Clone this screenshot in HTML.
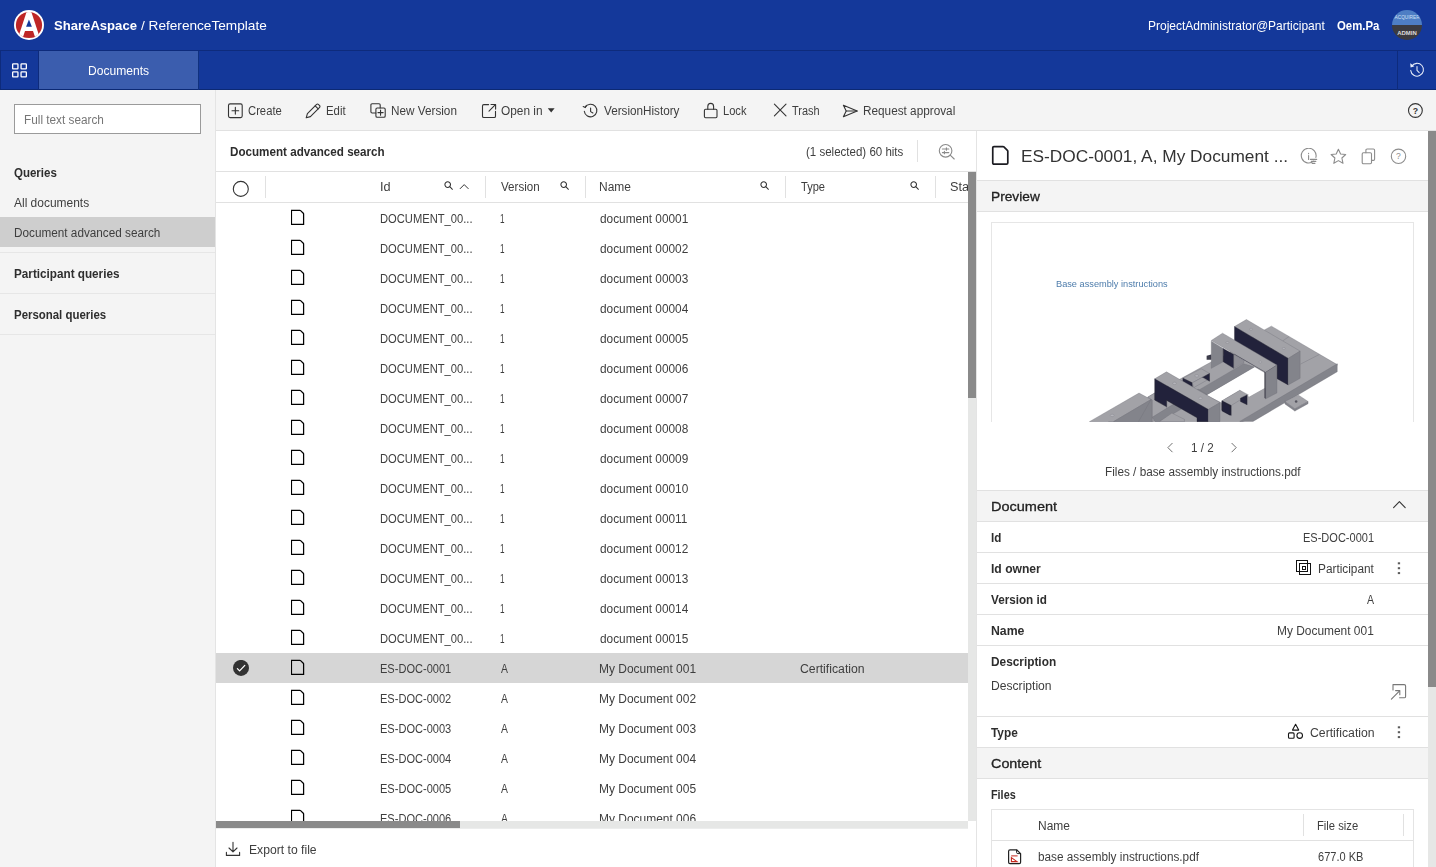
<!DOCTYPE html>
<html><head><meta charset="utf-8"><title>ShareAspace</title>
<style>
html,body{margin:0;padding:0;}
body{width:1436px;height:867px;overflow:hidden;position:relative;background:#fff;font-family:"Liberation Sans",sans-serif;}
.b{position:absolute;display:block;}
.t{position:absolute;white-space:nowrap;line-height:20px;transform-origin:0 50%;display:block;}
</style></head><body>
<div class="b" style="left:0px;top:0px;width:1436px;height:50px;background:#14389a;"></div>
<div class="b" style="left:0px;top:50px;width:1436px;height:1px;background:#0e2b7c;"></div>
<div class="b" style="left:0px;top:51px;width:1436px;height:39px;background:#14389a;"></div>
<div class="b" style="left:0px;top:89px;width:1436px;height:1px;background:#0c2974;"></div>
<div class="b" style="left:0px;top:51px;width:1px;height:38px;background:#0e2b7c;"></div>
<div class="b" style="left:38px;top:51px;width:1px;height:39px;background:#0e2b7c;"></div>
<div class="b" style="left:39px;top:51px;width:159px;height:38px;background:#3b5dae;"></div>
<div class="b" style="left:198px;top:51px;width:1px;height:39px;background:#10317f;"></div>
<div class="b" style="left:1397px;top:51px;width:1px;height:39px;background:#0e2b7c;"></div>
<svg class="b" style="left:14px;top:10px;" width="30" height="30" viewBox="0 0 30 30" fill="none"><defs><clipPath id="lc"><circle cx="15" cy="15" r="13.1"/></clipPath></defs>
<circle cx="15" cy="15" r="15" fill="#fff"/>
<circle cx="15" cy="15" r="13.1" fill="#be2626"/>
<g clip-path="url(#lc)">
<polygon points="13.2,0 16.7,0 26.55,30 3.35,30" fill="#fff"/>
<polygon points="14.95,9.4 17.9,16.7 12.1,16.7" fill="#14389a"/>
<polygon points="11.0,21 19.0,21 22,30 8,30" fill="#be2626"/>
</g></svg>
<span class="t" style="left:53.52px;top:15.76px;font-size:13.4px;font-weight:bold;color:#fff;transform:scaleX(0.9777);">ShareAspace</span>
<span class="t" style="left:141.40px;top:15.69px;font-size:13.6px;color:#fff;transform:scaleX(1.0025);">/ ReferenceTemplate</span>
<span class="t" style="left:1147.72px;top:15.80px;font-size:12.4px;color:#fff;transform:scaleX(0.9675);">ProjectAdministrator@Participant</span>
<span class="t" style="left:1337.23px;top:15.80px;font-size:12.4px;font-weight:bold;color:#fff;transform:scaleX(0.9180);">Oem.Pa</span>
<svg class="b" style="left:1392px;top:10px;" width="30" height="30" viewBox="0 0 30 30" fill="none"><defs><clipPath id="ac"><circle cx="15" cy="15" r="15"/></clipPath></defs>
<g clip-path="url(#ac)"><rect width="30" height="15" fill="#4e7ec4"/><rect y="15" width="30" height="15" fill="#3b3b40"/>
<text x="2.6" y="8.6" font-family="Liberation Sans" font-size="4.6" fill="#cfe0f5" textLength="25" lengthAdjust="spacingAndGlyphs">ACQUIRER</text>
<text x="5.2" y="24.6" font-family="Liberation Sans" font-weight="bold" font-size="5.2" fill="#dcdcdc" textLength="19.6" lengthAdjust="spacingAndGlyphs">ADMIN</text></g></svg>
<svg class="b" style="left:11px;top:62px;" width="18" height="18" viewBox="0 0 18 18" fill="none"><g stroke="#fff" stroke-width="1.3"><rect x="1.65" y="1.85" width="5.3" height="5" rx=".6"/><rect x="10.05" y="1.85" width="5.3" height="5" rx=".6"/><rect x="1.65" y="9.95" width="5.3" height="5" rx=".6"/><rect x="10.05" y="9.95" width="5.3" height="5" rx=".6"/></g></svg>
<span class="t" style="left:87.71px;top:60.74px;font-size:12px;color:#fff;transform:scaleX(1.0055);">Documents</span>
<svg class="b" style="left:1408px;top:61px;" width="18" height="18" viewBox="0 0 18 18" fill="none"><g stroke="#e8eefa" stroke-width="1.05" stroke-linecap="round" stroke-linejoin="round"><path d="M3.6 5.4 A6.4 6.4 0 1 1 2.7 9.4"/><path d="M9 5.6 V9.4 L11.2 11.6"/></g><path d="M2.2 2.2 L2.6 6.4 L6.4 5.2 Z" fill="#e8eefa"/></svg>
<div class="b" style="left:0px;top:90px;width:215px;height:777px;background:#f4f4f4;"></div>
<div class="b" style="left:215px;top:90px;width:1px;height:777px;background:#e4e4e4;"></div>
<div class="b" style="left:14px;top:104px;width:187px;height:30px;background:#fff;box-sizing:border-box;border:1px solid #9a9a9a;"></div>
<span class="t" style="left:24.43px;top:110.24px;font-size:12px;color:#767676;transform:scaleX(0.9824);">Full text search</span>
<span class="t" style="left:14.13px;top:163.24px;font-size:12px;font-weight:bold;color:#2e2e2e;transform:scaleX(0.9587);">Queries</span>
<span class="t" style="left:14.48px;top:193.04px;font-size:12px;color:#3e3e3e;transform:scaleX(0.9972);">All documents</span>
<div class="b" style="left:0px;top:217px;width:215px;height:30px;background:#cecece;"></div>
<span class="t" style="left:14.19px;top:223.04px;font-size:12px;color:#3e3e3e;transform:scaleX(0.9796);">Document advanced search</span>
<div class="b" style="left:0px;top:252px;width:215px;height:1px;background:#e6e6e6;"></div>
<span class="t" style="left:14.32px;top:264.04px;font-size:12px;font-weight:bold;color:#2e2e2e;transform:scaleX(0.9762);">Participant queries</span>
<div class="b" style="left:0px;top:293px;width:215px;height:1px;background:#e6e6e6;"></div>
<span class="t" style="left:14.34px;top:304.84px;font-size:12px;font-weight:bold;color:#2e2e2e;transform:scaleX(0.9527);">Personal queries</span>
<div class="b" style="left:0px;top:334px;width:215px;height:1px;background:#e6e6e6;"></div>
<div class="b" style="left:216px;top:90px;width:1220px;height:40px;background:#f4f4f4;"></div>
<div class="b" style="left:216px;top:130px;width:1220px;height:1px;background:#e1e1e1;"></div>
<svg class="b" style="left:227px;top:102px;" width="17" height="17" viewBox="0 0 17 17" fill="none"><g stroke="#333" stroke-width="1.1" stroke-linecap="round" stroke-linejoin="round"><rect x="1.5" y="1.9" width="13.7" height="13.7" rx="1.6"/><path d="M8.35 5.4V12.1M5 8.75H11.7"/></g></svg>
<span class="t" style="left:248.23px;top:100.84px;font-size:12px;color:#3e3e3e;transform:scaleX(0.9376);">Create</span>
<svg class="b" style="left:305px;top:103px;" width="17" height="16" viewBox="0 0 17 16" fill="none"><g stroke="#333" stroke-width="1.1" stroke-linecap="round" stroke-linejoin="round"><path d="M1.2 14.8 L2.4 10.6 L11.6 1.4 Q12.6 .6 13.6 1.6 L14.6 2.6 Q15.4 3.6 14.4 4.6 L5.4 13.6 Z"/><path d="M10.2 2.8 L13.2 5.8"/></g></svg>
<span class="t" style="left:326.47px;top:100.84px;font-size:12px;color:#3e3e3e;transform:scaleX(0.9487);">Edit</span>
<svg class="b" style="left:369px;top:102px;" width="18" height="17" viewBox="0 0 18 17" fill="none"><g stroke="#333" stroke-width="1.1" stroke-linecap="round" stroke-linejoin="round"><path d="M6.9 11 H3.1 Q1.9 11 1.9 9.8 V3 Q1.9 1.8 3.1 1.8 H10 Q11.2 1.8 11.2 3 V6"/><rect x="6.9" y="6" width="9.3" height="9.2" rx="1.3"/><path d="M11.55 8V13.2M8.95 10.6H14.15"/></g></svg>
<span class="t" style="left:390.64px;top:100.84px;font-size:12px;color:#3e3e3e;transform:scaleX(0.9786);">New Version</span>
<svg class="b" style="left:481px;top:103px;" width="16" height="16" viewBox="0 0 16 16" fill="none"><g stroke="#333" stroke-width="1.1" stroke-linecap="round" stroke-linejoin="round"><path d="M7.6 1.6 H2.8 Q1.5 1.6 1.5 2.9 V13.2 Q1.5 14.5 2.8 14.5 H13.2 Q14.5 14.5 14.5 13.2 V8.4"/><path d="M10 1.5 H14.6 V6.1"/><path d="M14.4 1.7 L8 8.1"/></g></svg>
<span class="t" style="left:500.84px;top:100.84px;font-size:12px;color:#3e3e3e;transform:scaleX(0.9882);">Open in</span>
<svg class="b" style="left:547px;top:107px;" width="9" height="7" viewBox="0 0 9 7" fill="none"><polygon points="0.8,1.2 7.6,1.2 4.2,5.4" fill="#333"/></svg>
<svg class="b" style="left:582px;top:103px;" width="17" height="16" viewBox="0 0 17 16" fill="none"><g stroke="#333" stroke-width="1.1" stroke-linecap="round" stroke-linejoin="round"><path d="M3.2 4.2 A6.3 6.3 0 1 1 2.3 8.2"/><path d="M1.2 3.6 L3.3 4.6 L4.3 2.4" /><path d="M8.6 5 V8.6 L10.9 10"/></g></svg>
<span class="t" style="left:603.65px;top:100.84px;font-size:12px;color:#3e3e3e;transform:scaleX(0.9756);">VersionHistory</span>
<svg class="b" style="left:703px;top:102px;" width="16" height="17" viewBox="0 0 16 17" fill="none"><g stroke="#333" stroke-width="1.1" stroke-linecap="round" stroke-linejoin="round"><rect x="1.4" y="7.2" width="12.6" height="8.6" rx="1.2"/><path d="M4.8 7.2 V4.4 Q4.8 1.4 7.7 1.4 Q10.6 1.4 10.6 4.4 V7.2"/></g></svg>
<span class="t" style="left:723.39px;top:100.84px;font-size:12px;color:#3e3e3e;transform:scaleX(0.9270);">Lock</span>
<svg class="b" style="left:773px;top:103.3px;" width="15" height="14" viewBox="0 0 15 14" fill="none"><g stroke="#333" stroke-width="1.1" stroke-linecap="round" stroke-linejoin="round"><path d="M1.4 1.2 L13 12.8M13 1.2 L1.4 12.8"/></g></svg>
<span class="t" style="left:791.95px;top:100.84px;font-size:12px;color:#3e3e3e;transform:scaleX(0.9116);">Trash</span>
<svg class="b" style="left:842px;top:102.5px;" width="17" height="16" viewBox="0 0 17 16" fill="none"><g stroke="#333" stroke-width="1.1" stroke-linecap="round" stroke-linejoin="round"><path d="M1.4 2.2 L15.2 8 L1.4 13.8 L4.2 8 Z"/><path d="M4.2 8 H15"/></g></svg>
<span class="t" style="left:862.73px;top:100.84px;font-size:12px;color:#3e3e3e;transform:scaleX(0.9808);">Request approval</span>
<svg class="b" style="left:1407px;top:102px;" width="18" height="18" viewBox="0 0 18 18" fill="none"><g stroke="#333" stroke-width="1.1"><circle cx="8.4" cy="8.5" r="6.9"/></g><text x="8.4" y="11.7" font-size="8.8" font-weight="bold" font-family="Liberation Sans" text-anchor="middle" fill="#333">?</text></svg>
<span class="t" style="left:229.82px;top:141.57px;font-size:12.5px;font-weight:bold;color:#2e2e2e;transform:scaleX(0.9317);">Document advanced search</span>
<span class="t" style="left:806.19px;top:141.84px;font-size:12px;color:#3e3e3e;transform:scaleX(0.9600);">(1 selected) 60 hits</span>
<div class="b" style="left:917px;top:140px;width:1px;height:22px;background:#e1e1e1;"></div>
<svg class="b" style="left:937px;top:143px;" width="20" height="19" viewBox="0 0 20 19" fill="none"><g stroke="#8a8a8a" stroke-width="1.1" stroke-linecap="round"><circle cx="8.6" cy="7.8" r="6.3"/><path d="M13.2 12.2 L17.2 16"/><path d="M5.4 6 H11.8M5.4 9.6 H11.8M9.4 4.8 V7.2M7.4 8.4 V10.8"/></g></svg>
<div class="b" style="left:216px;top:171px;width:760px;height:1px;background:#e1e1e1;"></div>
<div class="b" style="left:216px;top:202px;width:752px;height:1px;background:#e1e1e1;"></div>
<svg class="b" style="left:232px;top:180px;" width="18" height="18" viewBox="0 0 18 18" fill="none"><circle cx="8.8" cy="8.9" r="7.5" stroke="#333" stroke-width="1.1"/></svg>
<div class="b" style="left:265px;top:176px;width:1px;height:22px;background:#e1e1e1;"></div>
<div class="b" style="left:485px;top:176px;width:1px;height:22px;background:#e1e1e1;"></div>
<div class="b" style="left:585px;top:176px;width:1px;height:22px;background:#e1e1e1;"></div>
<div class="b" style="left:785px;top:176px;width:1px;height:22px;background:#e1e1e1;"></div>
<div class="b" style="left:935px;top:176px;width:1px;height:22px;background:#e1e1e1;"></div>
<span class="t" style="left:379.83px;top:176.84px;font-size:12px;color:#3e3e3e;transform:scaleX(1.0582);">Id</span>
<span class="t" style="left:500.65px;top:176.84px;font-size:12px;color:#3e3e3e;transform:scaleX(0.9670);">Version</span>
<span class="t" style="left:599.42px;top:176.84px;font-size:12px;color:#3e3e3e;transform:scaleX(0.9970);">Name</span>
<span class="t" style="left:800.95px;top:176.84px;font-size:12px;color:#3e3e3e;transform:scaleX(0.9241);">Type</span>
<div class="b" style="left:940px;top:172px;width:28px;height:30px;overflow:hidden;">
<span class="t" style="left:9.52px;top:4.84px;font-size:12px;color:#3e3e3e;transform:scaleX(1.0563);">Status</span>
</div>
<svg class="b" style="left:444px;top:181px;" width="10" height="10" viewBox="0 0 10 10" fill="none"><g stroke="#333" stroke-width="1.05" stroke-linecap="round"><circle cx="3.7" cy="3.6" r="2.8"/><path d="M5.8 5.7 L8.4 8.3"/></g></svg>
<svg class="b" style="left:560px;top:181px;" width="10" height="10" viewBox="0 0 10 10" fill="none"><g stroke="#333" stroke-width="1.05" stroke-linecap="round"><circle cx="3.7" cy="3.6" r="2.8"/><path d="M5.8 5.7 L8.4 8.3"/></g></svg>
<svg class="b" style="left:760px;top:181px;" width="10" height="10" viewBox="0 0 10 10" fill="none"><g stroke="#333" stroke-width="1.05" stroke-linecap="round"><circle cx="3.7" cy="3.6" r="2.8"/><path d="M5.8 5.7 L8.4 8.3"/></g></svg>
<svg class="b" style="left:910px;top:181px;" width="10" height="10" viewBox="0 0 10 10" fill="none"><g stroke="#333" stroke-width="1.05" stroke-linecap="round"><circle cx="3.7" cy="3.6" r="2.8"/><path d="M5.8 5.7 L8.4 8.3"/></g></svg>
<svg class="b" style="left:459px;top:182px;" width="11" height="8" viewBox="0 0 11 8" fill="none"><path d="M1.2 6.6 L5.2 2.6 L9.2 6.6" stroke="#333" stroke-width="1" stroke-linecap="round" stroke-linejoin="round"/></svg>
<div class="b" style="left:216px;top:203px;width:752px;height:618px;overflow:hidden;">
<svg class="b" style="left:75px;top:6px;" width="14" height="17" viewBox="0 0 14 17" fill="none"><path d="M.45 1.3 H8.9 Q9.3 1.3 9.6 1.6 L12.3 4.3 Q12.6 4.6 12.6 5 V15.3 H.45 Z" stroke="#000" stroke-width="1.25" stroke-linejoin="miter"/></svg>
<span class="t" style="left:163.98px;top:5.74px;font-size:12px;color:#3e3e3e;transform:scaleX(0.9314);">DOCUMENT_00...</span>
<span class="t" style="left:284.08px;top:5.74px;font-size:12px;color:#3e3e3e;transform:scaleX(0.6765);">1</span>
<span class="t" style="left:383.90px;top:5.74px;font-size:12px;color:#3e3e3e;transform:scaleX(0.9874);">document 00001</span>
<svg class="b" style="left:75px;top:36px;" width="14" height="17" viewBox="0 0 14 17" fill="none"><path d="M.45 1.3 H8.9 Q9.3 1.3 9.6 1.6 L12.3 4.3 Q12.6 4.6 12.6 5 V15.3 H.45 Z" stroke="#000" stroke-width="1.25" stroke-linejoin="miter"/></svg>
<span class="t" style="left:163.98px;top:35.74px;font-size:12px;color:#3e3e3e;transform:scaleX(0.9314);">DOCUMENT_00...</span>
<span class="t" style="left:284.08px;top:35.74px;font-size:12px;color:#3e3e3e;transform:scaleX(0.6765);">1</span>
<span class="t" style="left:383.90px;top:35.74px;font-size:12px;color:#3e3e3e;transform:scaleX(0.9874);">document 00002</span>
<svg class="b" style="left:75px;top:66px;" width="14" height="17" viewBox="0 0 14 17" fill="none"><path d="M.45 1.3 H8.9 Q9.3 1.3 9.6 1.6 L12.3 4.3 Q12.6 4.6 12.6 5 V15.3 H.45 Z" stroke="#000" stroke-width="1.25" stroke-linejoin="miter"/></svg>
<span class="t" style="left:163.98px;top:65.74px;font-size:12px;color:#3e3e3e;transform:scaleX(0.9314);">DOCUMENT_00...</span>
<span class="t" style="left:284.08px;top:65.74px;font-size:12px;color:#3e3e3e;transform:scaleX(0.6765);">1</span>
<span class="t" style="left:383.90px;top:65.74px;font-size:12px;color:#3e3e3e;transform:scaleX(0.9874);">document 00003</span>
<svg class="b" style="left:75px;top:96px;" width="14" height="17" viewBox="0 0 14 17" fill="none"><path d="M.45 1.3 H8.9 Q9.3 1.3 9.6 1.6 L12.3 4.3 Q12.6 4.6 12.6 5 V15.3 H.45 Z" stroke="#000" stroke-width="1.25" stroke-linejoin="miter"/></svg>
<span class="t" style="left:163.98px;top:95.74px;font-size:12px;color:#3e3e3e;transform:scaleX(0.9314);">DOCUMENT_00...</span>
<span class="t" style="left:284.08px;top:95.74px;font-size:12px;color:#3e3e3e;transform:scaleX(0.6765);">1</span>
<span class="t" style="left:383.90px;top:95.74px;font-size:12px;color:#3e3e3e;transform:scaleX(0.9874);">document 00004</span>
<svg class="b" style="left:75px;top:126px;" width="14" height="17" viewBox="0 0 14 17" fill="none"><path d="M.45 1.3 H8.9 Q9.3 1.3 9.6 1.6 L12.3 4.3 Q12.6 4.6 12.6 5 V15.3 H.45 Z" stroke="#000" stroke-width="1.25" stroke-linejoin="miter"/></svg>
<span class="t" style="left:163.98px;top:125.74px;font-size:12px;color:#3e3e3e;transform:scaleX(0.9314);">DOCUMENT_00...</span>
<span class="t" style="left:284.08px;top:125.74px;font-size:12px;color:#3e3e3e;transform:scaleX(0.6765);">1</span>
<span class="t" style="left:383.90px;top:125.74px;font-size:12px;color:#3e3e3e;transform:scaleX(0.9874);">document 00005</span>
<svg class="b" style="left:75px;top:156px;" width="14" height="17" viewBox="0 0 14 17" fill="none"><path d="M.45 1.3 H8.9 Q9.3 1.3 9.6 1.6 L12.3 4.3 Q12.6 4.6 12.6 5 V15.3 H.45 Z" stroke="#000" stroke-width="1.25" stroke-linejoin="miter"/></svg>
<span class="t" style="left:163.98px;top:155.74px;font-size:12px;color:#3e3e3e;transform:scaleX(0.9314);">DOCUMENT_00...</span>
<span class="t" style="left:284.08px;top:155.74px;font-size:12px;color:#3e3e3e;transform:scaleX(0.6765);">1</span>
<span class="t" style="left:383.90px;top:155.74px;font-size:12px;color:#3e3e3e;transform:scaleX(0.9874);">document 00006</span>
<svg class="b" style="left:75px;top:186px;" width="14" height="17" viewBox="0 0 14 17" fill="none"><path d="M.45 1.3 H8.9 Q9.3 1.3 9.6 1.6 L12.3 4.3 Q12.6 4.6 12.6 5 V15.3 H.45 Z" stroke="#000" stroke-width="1.25" stroke-linejoin="miter"/></svg>
<span class="t" style="left:163.98px;top:185.74px;font-size:12px;color:#3e3e3e;transform:scaleX(0.9314);">DOCUMENT_00...</span>
<span class="t" style="left:284.08px;top:185.74px;font-size:12px;color:#3e3e3e;transform:scaleX(0.6765);">1</span>
<span class="t" style="left:383.90px;top:185.74px;font-size:12px;color:#3e3e3e;transform:scaleX(0.9874);">document 00007</span>
<svg class="b" style="left:75px;top:216px;" width="14" height="17" viewBox="0 0 14 17" fill="none"><path d="M.45 1.3 H8.9 Q9.3 1.3 9.6 1.6 L12.3 4.3 Q12.6 4.6 12.6 5 V15.3 H.45 Z" stroke="#000" stroke-width="1.25" stroke-linejoin="miter"/></svg>
<span class="t" style="left:163.98px;top:215.74px;font-size:12px;color:#3e3e3e;transform:scaleX(0.9314);">DOCUMENT_00...</span>
<span class="t" style="left:284.08px;top:215.74px;font-size:12px;color:#3e3e3e;transform:scaleX(0.6765);">1</span>
<span class="t" style="left:383.90px;top:215.74px;font-size:12px;color:#3e3e3e;transform:scaleX(0.9874);">document 00008</span>
<svg class="b" style="left:75px;top:246px;" width="14" height="17" viewBox="0 0 14 17" fill="none"><path d="M.45 1.3 H8.9 Q9.3 1.3 9.6 1.6 L12.3 4.3 Q12.6 4.6 12.6 5 V15.3 H.45 Z" stroke="#000" stroke-width="1.25" stroke-linejoin="miter"/></svg>
<span class="t" style="left:163.98px;top:245.74px;font-size:12px;color:#3e3e3e;transform:scaleX(0.9314);">DOCUMENT_00...</span>
<span class="t" style="left:284.08px;top:245.74px;font-size:12px;color:#3e3e3e;transform:scaleX(0.6765);">1</span>
<span class="t" style="left:383.90px;top:245.74px;font-size:12px;color:#3e3e3e;transform:scaleX(0.9874);">document 00009</span>
<svg class="b" style="left:75px;top:276px;" width="14" height="17" viewBox="0 0 14 17" fill="none"><path d="M.45 1.3 H8.9 Q9.3 1.3 9.6 1.6 L12.3 4.3 Q12.6 4.6 12.6 5 V15.3 H.45 Z" stroke="#000" stroke-width="1.25" stroke-linejoin="miter"/></svg>
<span class="t" style="left:163.98px;top:275.74px;font-size:12px;color:#3e3e3e;transform:scaleX(0.9314);">DOCUMENT_00...</span>
<span class="t" style="left:284.08px;top:275.74px;font-size:12px;color:#3e3e3e;transform:scaleX(0.6765);">1</span>
<span class="t" style="left:383.90px;top:275.74px;font-size:12px;color:#3e3e3e;transform:scaleX(0.9874);">document 00010</span>
<svg class="b" style="left:75px;top:306px;" width="14" height="17" viewBox="0 0 14 17" fill="none"><path d="M.45 1.3 H8.9 Q9.3 1.3 9.6 1.6 L12.3 4.3 Q12.6 4.6 12.6 5 V15.3 H.45 Z" stroke="#000" stroke-width="1.25" stroke-linejoin="miter"/></svg>
<span class="t" style="left:163.98px;top:305.74px;font-size:12px;color:#3e3e3e;transform:scaleX(0.9314);">DOCUMENT_00...</span>
<span class="t" style="left:284.08px;top:305.74px;font-size:12px;color:#3e3e3e;transform:scaleX(0.6765);">1</span>
<span class="t" style="left:383.90px;top:305.74px;font-size:12px;color:#3e3e3e;transform:scaleX(0.9874);">document 00011</span>
<svg class="b" style="left:75px;top:336px;" width="14" height="17" viewBox="0 0 14 17" fill="none"><path d="M.45 1.3 H8.9 Q9.3 1.3 9.6 1.6 L12.3 4.3 Q12.6 4.6 12.6 5 V15.3 H.45 Z" stroke="#000" stroke-width="1.25" stroke-linejoin="miter"/></svg>
<span class="t" style="left:163.98px;top:335.74px;font-size:12px;color:#3e3e3e;transform:scaleX(0.9314);">DOCUMENT_00...</span>
<span class="t" style="left:284.08px;top:335.74px;font-size:12px;color:#3e3e3e;transform:scaleX(0.6765);">1</span>
<span class="t" style="left:383.90px;top:335.74px;font-size:12px;color:#3e3e3e;transform:scaleX(0.9874);">document 00012</span>
<svg class="b" style="left:75px;top:366px;" width="14" height="17" viewBox="0 0 14 17" fill="none"><path d="M.45 1.3 H8.9 Q9.3 1.3 9.6 1.6 L12.3 4.3 Q12.6 4.6 12.6 5 V15.3 H.45 Z" stroke="#000" stroke-width="1.25" stroke-linejoin="miter"/></svg>
<span class="t" style="left:163.98px;top:365.74px;font-size:12px;color:#3e3e3e;transform:scaleX(0.9314);">DOCUMENT_00...</span>
<span class="t" style="left:284.08px;top:365.74px;font-size:12px;color:#3e3e3e;transform:scaleX(0.6765);">1</span>
<span class="t" style="left:383.90px;top:365.74px;font-size:12px;color:#3e3e3e;transform:scaleX(0.9874);">document 00013</span>
<svg class="b" style="left:75px;top:396px;" width="14" height="17" viewBox="0 0 14 17" fill="none"><path d="M.45 1.3 H8.9 Q9.3 1.3 9.6 1.6 L12.3 4.3 Q12.6 4.6 12.6 5 V15.3 H.45 Z" stroke="#000" stroke-width="1.25" stroke-linejoin="miter"/></svg>
<span class="t" style="left:163.98px;top:395.74px;font-size:12px;color:#3e3e3e;transform:scaleX(0.9314);">DOCUMENT_00...</span>
<span class="t" style="left:284.08px;top:395.74px;font-size:12px;color:#3e3e3e;transform:scaleX(0.6765);">1</span>
<span class="t" style="left:383.90px;top:395.74px;font-size:12px;color:#3e3e3e;transform:scaleX(0.9874);">document 00014</span>
<svg class="b" style="left:75px;top:426px;" width="14" height="17" viewBox="0 0 14 17" fill="none"><path d="M.45 1.3 H8.9 Q9.3 1.3 9.6 1.6 L12.3 4.3 Q12.6 4.6 12.6 5 V15.3 H.45 Z" stroke="#000" stroke-width="1.25" stroke-linejoin="miter"/></svg>
<span class="t" style="left:163.98px;top:425.74px;font-size:12px;color:#3e3e3e;transform:scaleX(0.9314);">DOCUMENT_00...</span>
<span class="t" style="left:284.08px;top:425.74px;font-size:12px;color:#3e3e3e;transform:scaleX(0.6765);">1</span>
<span class="t" style="left:383.90px;top:425.74px;font-size:12px;color:#3e3e3e;transform:scaleX(0.9874);">document 00015</span>
<div class="b" style="left:0px;top:450px;width:752px;height:30px;background:#d6d6d6;"></div>
<svg class="b" style="left:16px;top:457px;" width="18" height="18" viewBox="0 0 18 18" fill="none"><circle cx="9" cy="7.9" r="8" fill="#333"/><path d="M5.4 8.6 L7.6 10.9 L12.8 5.4" stroke="#fff" stroke-width="1.25" stroke-linecap="round" stroke-linejoin="round"/></svg>
<svg class="b" style="left:75px;top:456px;" width="14" height="17" viewBox="0 0 14 17" fill="none"><path d="M.45 1.3 H8.9 Q9.3 1.3 9.6 1.6 L12.3 4.3 Q12.6 4.6 12.6 5 V15.3 H.45 Z" stroke="#000" stroke-width="1.25" stroke-linejoin="miter"/></svg>
<span class="t" style="left:163.99px;top:455.74px;font-size:12px;color:#3e3e3e;transform:scaleX(0.9209);">ES-DOC-0001</span>
<span class="t" style="left:284.68px;top:455.74px;font-size:12px;color:#3e3e3e;transform:scaleX(0.8671);">A</span>
<span class="t" style="left:383.42px;top:455.74px;font-size:12px;color:#3e3e3e;transform:scaleX(0.9968);">My Document 001</span>
<span class="t" style="left:583.78px;top:455.74px;font-size:12px;color:#3e3e3e;transform:scaleX(1.0199);">Certification</span>
<svg class="b" style="left:75px;top:486px;" width="14" height="17" viewBox="0 0 14 17" fill="none"><path d="M.45 1.3 H8.9 Q9.3 1.3 9.6 1.6 L12.3 4.3 Q12.6 4.6 12.6 5 V15.3 H.45 Z" stroke="#000" stroke-width="1.25" stroke-linejoin="miter"/></svg>
<span class="t" style="left:163.99px;top:485.74px;font-size:12px;color:#3e3e3e;transform:scaleX(0.9209);">ES-DOC-0002</span>
<span class="t" style="left:284.68px;top:485.74px;font-size:12px;color:#3e3e3e;transform:scaleX(0.8671);">A</span>
<span class="t" style="left:383.42px;top:485.74px;font-size:12px;color:#3e3e3e;transform:scaleX(0.9968);">My Document 002</span>
<svg class="b" style="left:75px;top:516px;" width="14" height="17" viewBox="0 0 14 17" fill="none"><path d="M.45 1.3 H8.9 Q9.3 1.3 9.6 1.6 L12.3 4.3 Q12.6 4.6 12.6 5 V15.3 H.45 Z" stroke="#000" stroke-width="1.25" stroke-linejoin="miter"/></svg>
<span class="t" style="left:163.99px;top:515.74px;font-size:12px;color:#3e3e3e;transform:scaleX(0.9209);">ES-DOC-0003</span>
<span class="t" style="left:284.68px;top:515.74px;font-size:12px;color:#3e3e3e;transform:scaleX(0.8671);">A</span>
<span class="t" style="left:383.42px;top:515.74px;font-size:12px;color:#3e3e3e;transform:scaleX(0.9968);">My Document 003</span>
<svg class="b" style="left:75px;top:546px;" width="14" height="17" viewBox="0 0 14 17" fill="none"><path d="M.45 1.3 H8.9 Q9.3 1.3 9.6 1.6 L12.3 4.3 Q12.6 4.6 12.6 5 V15.3 H.45 Z" stroke="#000" stroke-width="1.25" stroke-linejoin="miter"/></svg>
<span class="t" style="left:163.99px;top:545.74px;font-size:12px;color:#3e3e3e;transform:scaleX(0.9209);">ES-DOC-0004</span>
<span class="t" style="left:284.68px;top:545.74px;font-size:12px;color:#3e3e3e;transform:scaleX(0.8671);">A</span>
<span class="t" style="left:383.42px;top:545.74px;font-size:12px;color:#3e3e3e;transform:scaleX(0.9968);">My Document 004</span>
<svg class="b" style="left:75px;top:576px;" width="14" height="17" viewBox="0 0 14 17" fill="none"><path d="M.45 1.3 H8.9 Q9.3 1.3 9.6 1.6 L12.3 4.3 Q12.6 4.6 12.6 5 V15.3 H.45 Z" stroke="#000" stroke-width="1.25" stroke-linejoin="miter"/></svg>
<span class="t" style="left:163.99px;top:575.74px;font-size:12px;color:#3e3e3e;transform:scaleX(0.9209);">ES-DOC-0005</span>
<span class="t" style="left:284.68px;top:575.74px;font-size:12px;color:#3e3e3e;transform:scaleX(0.8671);">A</span>
<span class="t" style="left:383.42px;top:575.74px;font-size:12px;color:#3e3e3e;transform:scaleX(0.9968);">My Document 005</span>
<svg class="b" style="left:75px;top:606px;" width="14" height="17" viewBox="0 0 14 17" fill="none"><path d="M.45 1.3 H8.9 Q9.3 1.3 9.6 1.6 L12.3 4.3 Q12.6 4.6 12.6 5 V15.3 H.45 Z" stroke="#000" stroke-width="1.25" stroke-linejoin="miter"/></svg>
<span class="t" style="left:163.99px;top:605.74px;font-size:12px;color:#3e3e3e;transform:scaleX(0.9209);">ES-DOC-0006</span>
<span class="t" style="left:284.68px;top:605.74px;font-size:12px;color:#3e3e3e;transform:scaleX(0.8671);">A</span>
<span class="t" style="left:383.42px;top:605.74px;font-size:12px;color:#3e3e3e;transform:scaleX(0.9968);">My Document 006</span>
</div>
<div class="b" style="left:968px;top:172px;width:8px;height:649px;background:#e6e7e6;"></div>
<div class="b" style="left:968px;top:172px;width:8px;height:226px;background:#8a8a8a;"></div>
<div class="b" style="left:216px;top:821px;width:752px;height:7px;background:#e6e7e6;"></div>
<div class="b" style="left:216px;top:821px;width:244px;height:7px;background:#8a8a8a;"></div>
<div class="b" style="left:216px;top:828px;width:752px;height:1px;background:#eceded;"></div>
<svg class="b" style="left:225px;top:841px;" width="16" height="16" viewBox="0 0 16 16" fill="none"><g stroke="#333" stroke-width="1.1" stroke-linecap="round" stroke-linejoin="round"><path d="M8 1.2 V10.6M4 7 L8 10.8 L12 7"/><path d="M1.4 11.4 V14.4 H14.6 V11.4"/></g></svg>
<span class="t" style="left:248.80px;top:840.34px;font-size:12px;color:#3e3e3e;transform:scaleX(1.0141);">Export to file</span>
<div class="b" style="left:976px;top:131px;width:1px;height:736px;background:#e4e4e4;"></div>
<div class="b" style="left:1428px;top:131px;width:8px;height:736px;background:#e6e7e6;"></div>
<div class="b" style="left:1428px;top:131px;width:8px;height:556px;background:#8a8a8a;"></div>
<svg class="b" style="left:991px;top:145px;" width="19" height="21" viewBox="0 0 19 21" fill="none"><path d="M3 1.55 H12 Q12.5 1.55 12.9 1.9 L16.4 5.3 Q16.8 5.7 16.8 6.2 V17.9 Q16.8 19.15 15.5 19.15 H3 Q1.75 19.15 1.75 17.9 V2.8 Q1.75 1.55 3 1.55 Z" stroke="#1c1c22" stroke-width="1.7" stroke-linejoin="round"/></svg>
<span class="t" style="left:1020.98px;top:146.78px;font-size:16.8px;color:#333;transform:scaleX(1.0302);">ES-DOC-0001, A, My Document ...</span>
<svg class="b" style="left:1300px;top:147.8px;" width="18" height="18" viewBox="0 0 18 18" fill="none"><g stroke="#8c8c8c" stroke-width="1.1" stroke-linecap="round" stroke-linejoin="round"><path d="M13.6 13.2 A7.4 7.4 0 1 1 15.9 9.4"/><path d="M8.6 7.6 V11.4M8.6 5.4 V5.8"/><path d="M10.4 11.4 H16.7M11.3 13.4 H15.8M12.2 15.4 H14.9"/></g></svg>
<svg class="b" style="left:1330px;top:148px;" width="17" height="17" viewBox="0 0 17 17" fill="none"><g stroke="#8c8c8c" stroke-width="1.1" stroke-linecap="round" stroke-linejoin="round"><path d="M8.4 1.2 L10.6 6 L15.7 6.5 L11.9 10 L13 15.3 L8.4 12.6 L3.8 15.3 L4.9 10 L1.1 6.5 L6.2 6 Z"/></g></svg>
<svg class="b" style="left:1361px;top:148px;" width="15" height="17" viewBox="0 0 15 17" fill="none"><g stroke="#8c8c8c" stroke-width="1.1" stroke-linecap="round" stroke-linejoin="round"><path d="M4.9 4.7 V2.2 Q4.9 1 6.1 1 H12.4 Q13.6 1 13.6 2.2 V11.2 Q13.6 12.4 12.4 12.4 H10.5"/><rect x="1.2" y="4.7" width="9.3" height="11" rx="1.2"/></g></svg>
<svg class="b" style="left:1390px;top:148px;" width="17" height="17" viewBox="0 0 17 17" fill="none"><g stroke="#8c8c8c" stroke-width="1.1" stroke-linecap="round" stroke-linejoin="round"><circle cx="8.5" cy="8.3" r="7.2"/></g><text x="8.5" y="11.4" font-size="8.6" font-family="Liberation Sans" text-anchor="middle" fill="#8c8c8c">?</text></svg>
<div class="b" style="left:977px;top:180px;width:451px;height:32px;background:#f4f4f4;box-sizing:border-box;border-top:1px solid #e1e1e1;border-bottom:1px solid #e1e1e1;"></div>
<span class="t" style="left:990.97px;top:186.92px;font-size:13.5px;color:#222;transform:scaleX(1.0162);-webkit-text-stroke:.3px #222;">Preview</span>
<div class="b" style="left:991px;top:222px;width:423px;height:200px;background:#fff;box-sizing:border-box;border:1px solid #e6e6e6;border-bottom:none;"></div>
<span class="t" style="left:1055.74px;top:273.82px;font-size:8.6px;color:#4d7cab;transform:scaleX(1.0719);">Base assembly instructions</span>
<svg class="b" style="left:991px;top:222px;overflow:hidden;" width="423" height="200" viewBox="0 0 423 200" fill="none"><defs><filter id="bl" x="-5%" y="-5%" width="110%" height="110%"><feGaussianBlur stdDeviation="0.32"/></filter></defs><g filter="url(#bl)"><polygon points="280.41,104.14 346.59,142.87 251.64,199.84 117.20,199.84 156.88,175.21 163.65,171.07 220.05,140.05 231.90,134.41 274.20,107.52" fill="#a2a2a7" stroke="#6f6f78" stroke-width=".35" stroke-linejoin="round"/><polygon points="346.27,141.71 346.27,149.67 262.05,199.41 248.79,199.41" fill="#83848b" stroke="#6f6f78" stroke-width=".35" stroke-linejoin="round"/><polygon points="293.88,179.51 307.14,172.88 317.09,179.51 303.83,186.81" fill="#a2a2a7" stroke="#6f6f78" stroke-width=".35" stroke-linejoin="round"/><polygon points="293.88,179.51 303.83,186.81 303.83,189.06 293.88,181.90" fill="#83848b" stroke="#6f6f78" stroke-width=".35" stroke-linejoin="round"/><polygon points="303.83,186.81 317.09,179.51 317.09,181.63 303.83,189.06" fill="#83848b" stroke="#6f6f78" stroke-width=".35" stroke-linejoin="round"/><circle cx="305.15" cy="179.51" r="1.3" fill="#55555f"/><polygon points="215.63,172.88 263.38,145.03 274.65,151.40 274.65,165.59 258.07,174.87 248.79,168.24 230.88,178.85 230.88,180.84" fill="#fff"/><polygon points="206.35,168.90 252.77,141.71 263.38,145.03 215.63,172.88 206.35,178.19" fill="#83848b" stroke="#6f6f78" stroke-width=".35" stroke-linejoin="round"/><polygon points="243.48,104.58 255.42,97.55 309.13,129.11 297.20,136.41" fill="#a2a2a7" stroke="#6f6f78" stroke-width=".35" stroke-linejoin="round"/><polygon points="243.48,104.58 297.20,136.41 297.20,162.93 286.59,156.97 243.48,132.43" fill="#24243a" stroke="#1c1c2c" stroke-width=".35" stroke-linejoin="round"/><polygon points="297.20,136.41 309.13,129.11 309.13,156.30 297.20,162.93" fill="#83848b" stroke="#6f6f78" stroke-width=".35" stroke-linejoin="round"/><polygon points="220.27,119.17 232.21,126.46 232.21,139.72 220.27,146.36" fill="#83848b" stroke="#6f6f78" stroke-width=".35" stroke-linejoin="round"/><polygon points="232.21,126.46 242.82,132.43 242.82,146.36 232.21,139.72" fill="#24243a" stroke="#1c1c2c" stroke-width=".35" stroke-linejoin="round"/><polygon points="242.82,132.43 252.77,138.40 252.77,141.05 242.82,146.36" fill="#8e8e95" stroke="#6f6f78" stroke-width=".35" stroke-linejoin="round"/><polygon points="220.27,118.50 231.55,111.21 285.92,143.04 274.65,150.33" fill="#a2a2a7" stroke="#6f6f78" stroke-width=".35" stroke-linejoin="round"/><polygon points="274.65,150.33 285.92,143.04 285.92,170.89 274.65,176.86" fill="#83848b" stroke="#6f6f78" stroke-width=".35" stroke-linejoin="round"/><polygon points="273.32,149.67 274.92,150.47 274.92,176.86 273.32,175.93" fill="#55555f"/><polygon points="215.63,133.76 220.27,132.43 220.27,137.73 215.63,137.73" fill="#3a3a48"/><polygon points="230.88,178.85 248.79,168.24 257.41,172.88 240.17,183.49" fill="#a2a2a7" stroke="#6f6f78" stroke-width=".35" stroke-linejoin="round"/><polygon points="230.88,178.85 240.17,183.49 240.17,193.44 230.88,188.13" fill="#24243a" stroke="#1c1c2c" stroke-width=".35" stroke-linejoin="round"/><polygon points="249.45,176.20 256.08,172.88 256.08,182.83 249.45,179.51" fill="#24243a" stroke="#1c1c2c" stroke-width=".35" stroke-linejoin="round"/><polygon points="156.90,174.93 163.69,171.07 163.69,178.06 175.70,184.85 175.70,191.12 161.08,199.69 161.08,178.06" fill="#a2a2a7" stroke="#6f6f78" stroke-width=".35" stroke-linejoin="round"/><polygon points="161.08,195.30 207.04,167.10 215.92,172.32 168.39,199.69 164.21,199.69" fill="#83848b" stroke="#6f6f78" stroke-width=".35" stroke-linejoin="round"/><polygon points="98.40,199.69 148.02,171.07 160.03,177.54 122.43,199.69" fill="#a2a2a7" stroke="#6f6f78" stroke-width=".35" stroke-linejoin="round"/><polygon points="122.43,199.69 160.03,177.54 161.08,178.06 161.08,199.69" fill="#83848b" stroke="#6f6f78" stroke-width=".35" stroke-linejoin="round"/><polygon points="168.39,199.69 180.93,191.12 193.46,197.39 193.46,199.69" fill="#a2a2a7" stroke="#6f6f78" stroke-width=".35" stroke-linejoin="round"/><polygon points="191.89,156.13 210.17,146.73 218.53,151.43 201.29,160.83" fill="#a2a2a7" stroke="#6f6f78" stroke-width=".35" stroke-linejoin="round"/><polygon points="191.89,156.13 201.29,160.83 201.29,165.01 191.89,159.78" fill="#24243a" stroke="#1c1c2c" stroke-width=".35" stroke-linejoin="round"/><polygon points="211.22,155.61 218.53,151.43 218.53,159.26 211.22,155.08" fill="#24243a" stroke="#1c1c2c" stroke-width=".35" stroke-linejoin="round"/><polygon points="201.29,160.83 211.22,155.40 215.92,158.22 202.86,165.53" fill="#a2a2a7" stroke="#6f6f78" stroke-width=".35" stroke-linejoin="round"/><polygon points="163.69,156.86 175.49,149.86 228.98,180.68 217.28,187.47" fill="#a2a2a7" stroke="#6f6f78" stroke-width=".35" stroke-linejoin="round"/><polygon points="163.69,156.86 217.28,187.47 217.28,199.69 206.00,199.69 206.00,195.82 175.70,178.38 175.70,184.85 163.69,178.06" fill="#24243a" stroke="#1c1c2c" stroke-width=".35" stroke-linejoin="round"/><polygon points="217.28,187.47 228.98,180.68 228.98,199.69 217.28,199.69" fill="#83848b" stroke="#6f6f78" stroke-width=".35" stroke-linejoin="round"/><polygon points="231.07,179.63 239.01,183.81 239.01,193.21 231.07,189.03" fill="#24243a" stroke="#1c1c2c" stroke-width=".35" stroke-linejoin="round"/><polyline points="291.89,118.77 298.12,114.53" fill="none" stroke="#6f6f78" stroke-width=".35"/><polyline points="309.53,142.11 328.36,132.43" fill="none" stroke="#6f6f78" stroke-width=".35"/><ellipse cx="260.06" cy="107.23" rx="1.5" ry="1" fill="#b4b4ba" stroke="#77777f" stroke-width=".3"/><ellipse cx="292.82" cy="126.46" rx="1.5" ry="1" fill="#b4b4ba" stroke="#77777f" stroke-width=".3"/><ellipse cx="236.45" cy="120.49" rx="1.5" ry="1" fill="#b4b4ba" stroke="#77777f" stroke-width=".3"/><ellipse cx="269.34" cy="139.99" rx="1.5" ry="1" fill="#b4b4ba" stroke="#77777f" stroke-width=".3"/><ellipse cx="183.54" cy="161.35" rx="1.9" ry="1.2" fill="#b4b4ba" stroke="#77777f" stroke-width=".3"/><ellipse cx="209.44" cy="176.29" rx="1.9" ry="1.2" fill="#b4b4ba" stroke="#77777f" stroke-width=".3"/><ellipse cx="121.17" cy="193.42" rx="1.9" ry="1.2" fill="#b4b4ba" stroke="#77777f" stroke-width=".3"/><ellipse cx="205.79" cy="153.83" rx="1.9" ry="1.2" fill="#b4b4ba" stroke="#77777f" stroke-width=".3"/><polyline points="147.50,199.69 160.03,177.54" fill="none" stroke="#6f6f78" stroke-width=".35"/></g></svg>
<svg class="b" style="left:1164px;top:441px;" width="12" height="13" viewBox="0 0 12 13" fill="none"><path d="M8.2 2.3 L3.9 6.6 L8.2 10.9" stroke="#707070" stroke-width="1" stroke-linecap="round" stroke-linejoin="round"/></svg>
<svg class="b" style="left:1228px;top:441px;" width="12" height="13" viewBox="0 0 12 13" fill="none"><path d="M3.9 2.3 L8.2 6.6 L3.9 10.9" stroke="#707070" stroke-width="1" stroke-linecap="round" stroke-linejoin="round"/></svg>
<span class="t" style="left:1190.91px;top:437.84px;font-size:12px;color:#3e3e3e;transform:scaleX(0.9711);">1 / 2</span>
<span class="t" style="left:1104.63px;top:461.84px;font-size:12px;color:#3e3e3e;transform:scaleX(0.9806);">Files / base assembly instructions.pdf</span>
<div class="b" style="left:977px;top:490px;width:451px;height:32px;background:#f4f4f4;box-sizing:border-box;border-top:1px solid #e1e1e1;border-bottom:1px solid #e1e1e1;"></div>
<span class="t" style="left:990.61px;top:496.52px;font-size:13.5px;color:#222;transform:scaleX(1.0742);-webkit-text-stroke:.3px #222;">Document</span>
<svg class="b" style="left:1392px;top:499px;" width="15" height="11" viewBox="0 0 15 11" fill="none"><path d="M1.6 8.6 L7.4 2.6 L13.2 8.6" stroke="#333" stroke-width="1.1" stroke-linecap="round" stroke-linejoin="round"/></svg>
<div class="b" style="left:977px;top:552px;width:451px;height:1px;background:#e1e1e1;"></div>
<div class="b" style="left:977px;top:583px;width:451px;height:1px;background:#e1e1e1;"></div>
<div class="b" style="left:977px;top:614px;width:451px;height:1px;background:#e1e1e1;"></div>
<div class="b" style="left:977px;top:645px;width:451px;height:1px;background:#e1e1e1;"></div>
<div class="b" style="left:977px;top:716px;width:451px;height:1px;background:#e1e1e1;"></div>
<span class="t" style="left:991.02px;top:527.84px;font-size:12px;font-weight:bold;color:#2e2e2e;transform:scaleX(0.9702);">Id</span>
<span class="t" style="left:1302.95px;top:527.84px;font-size:12px;color:#3e3e3e;transform:scaleX(0.9183);">ES-DOC-0001</span>
<span class="t" style="left:990.99px;top:558.84px;font-size:12px;font-weight:bold;color:#2e2e2e;transform:scaleX(1.0093);">Id owner</span>
<span class="t" style="left:1318.03px;top:558.84px;font-size:12px;color:#3e3e3e;transform:scaleX(0.9852);">Participant</span>
<svg class="b" style="left:1295px;top:559px;" width="18" height="17" viewBox="0 0 18 17" fill="none"><g stroke="#111" stroke-width="1" shape-rendering="crispEdges"><rect x="1.5" y="1.5" width="11" height="11"/><rect x="4.5" y="4.5" width="11" height="11"/><rect x="7.4" y="7.3" width="2.8" height="2.8"/></g></svg>
<svg class="b" style="left:1397px;top:561px;" width="4" height="15" viewBox="0 0 4 15" fill="none"><rect x=".8" y="1.3" width="2.3" height="2" fill="#5c5c5c"/><rect x=".8" y="6.2" width="2.3" height="2" fill="#5c5c5c"/><rect x=".8" y="11.1" width="2.3" height="2" fill="#5c5c5c"/></svg>
<span class="t" style="left:991.02px;top:589.84px;font-size:12px;font-weight:bold;color:#2e2e2e;transform:scaleX(0.9738);">Version id</span>
<span class="t" style="left:1366.63px;top:589.84px;font-size:12px;color:#3e3e3e;transform:scaleX(0.8797);">A</span>
<span class="t" style="left:990.98px;top:620.84px;font-size:12px;font-weight:bold;color:#2e2e2e;transform:scaleX(1.0232);">Name</span>
<span class="t" style="left:1277.47px;top:620.84px;font-size:12px;color:#3e3e3e;transform:scaleX(0.9937);">My Document 001</span>
<span class="t" style="left:991.01px;top:652.24px;font-size:12px;font-weight:bold;color:#2e2e2e;transform:scaleX(0.9866);">Description</span>
<span class="t" style="left:990.81px;top:676.24px;font-size:12px;color:#3e3e3e;transform:scaleX(1.0093);">Description</span>
<svg class="b" style="left:1390px;top:683px;" width="18" height="18" viewBox="0 0 18 18" fill="none"><g stroke="#777" stroke-width="1.1" stroke-linecap="round" stroke-linejoin="round"><path d="M3 1.6 H14.2 Q15.6 1.6 15.6 3 V13.4 Q15.6 14.8 14.2 14.8 H9.6 M3 1.6 V7"/><path d="M1.4 16.2 L9.6 7.8"/><path d="M5.6 7.6 H9.8 V11.8"/></g></svg>
<span class="t" style="left:991.17px;top:722.84px;font-size:12px;font-weight:bold;color:#2e2e2e;transform:scaleX(0.9860);">Type</span>
<span class="t" style="left:1309.78px;top:722.84px;font-size:12px;color:#3e3e3e;transform:scaleX(1.0199);">Certification</span>
<svg class="b" style="left:1287px;top:723.2px;" width="17" height="17" viewBox="0 0 17 17" fill="none"><g stroke="#151515" stroke-width="1.1" stroke-linejoin="round"><path d="M8.6 1.3 L11.7 7.1 H5.5 Z"/><rect x="1.5" y="9.9" width="5.6" height="5.4" rx="1"/><circle cx="12.7" cy="12.6" r="2.8"/></g></svg>
<svg class="b" style="left:1397px;top:724.9px;" width="4" height="15" viewBox="0 0 4 15" fill="none"><rect x=".8" y="1.3" width="2.3" height="2" fill="#5c5c5c"/><rect x=".8" y="6.2" width="2.3" height="2" fill="#5c5c5c"/><rect x=".8" y="11.1" width="2.3" height="2" fill="#5c5c5c"/></svg>
<div class="b" style="left:977px;top:747px;width:451px;height:32px;background:#f4f4f4;box-sizing:border-box;border-top:1px solid #e1e1e1;border-bottom:1px solid #e1e1e1;"></div>
<span class="t" style="left:991.07px;top:753.52px;font-size:13.5px;color:#222;transform:scaleX(1.0645);-webkit-text-stroke:.3px #222;">Content</span>
<span class="t" style="left:991.18px;top:784.74px;font-size:12px;font-weight:bold;color:#2e2e2e;transform:scaleX(0.9021);">Files</span>
<div class="b" style="left:991px;top:809px;width:423px;height:70px;background:#fff;box-sizing:border-box;border:1px solid #e4e4e4;"></div>
<div class="b" style="left:992px;top:840px;width:421px;height:1px;background:#e1e1e1;"></div>
<div class="b" style="left:1303px;top:814px;width:1px;height:22px;background:#e1e1e1;"></div>
<div class="b" style="left:1403px;top:814px;width:1px;height:22px;background:#e1e1e1;"></div>
<span class="t" style="left:1037.92px;top:816.04px;font-size:12px;color:#3e3e3e;transform:scaleX(0.9970);">Name</span>
<span class="t" style="left:1317.48px;top:816.04px;font-size:12px;color:#3e3e3e;transform:scaleX(0.9366);">File size</span>
<svg class="b" style="left:1007px;top:848px;" width="16" height="17" viewBox="0 0 16 17" fill="none"><path d="M3 1.8 H9.6 L13.6 5.6 V14.2 Q13.6 15.6 12.2 15.6 H3 Q1.6 15.6 1.6 14.2 V3.2 Q1.6 1.8 3 1.8 Z" stroke="#222" stroke-width="1.2" stroke-linejoin="round"/><path d="M9.6 1.8 V4.4 Q9.6 5.6 10.8 5.6 H13.6" stroke="#222" stroke-width="1"/><path d="M4.2 7.9 H10.6" stroke="#c4271c" stroke-width="1"/><path d="M4.4 9.6 L10 13.6 H4.4 Z" stroke="#c4271c" stroke-width="1.1" fill="none"/></svg>
<span class="t" style="left:1038.14px;top:846.84px;font-size:12px;color:#3e3e3e;transform:scaleX(0.9809);">base assembly instructions.pdf</span>
<span class="t" style="left:1317.84px;top:846.84px;font-size:12px;color:#3e3e3e;transform:scaleX(0.9184);">677.0 KB</span>
</body></html>
